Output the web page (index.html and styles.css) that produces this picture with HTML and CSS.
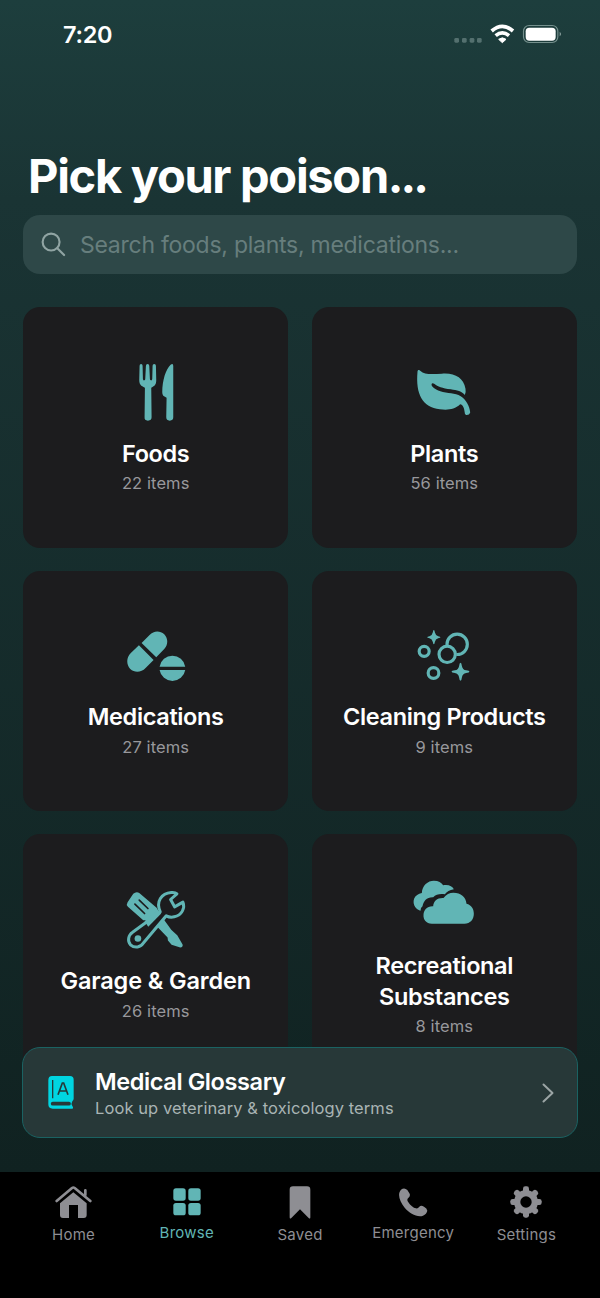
FILE: index.html
```html
<!DOCTYPE html>
<html lang="en">
<head>
<meta charset="utf-8">
<title>Pick your poison</title>
<link rel="stylesheet" href="styles.css">
</head>
<body>
<div class="app">
  <header class="status">
    <span class="time">7:20</span>
    <svg class="status-icons" viewBox="0 0 420 120">
      <g fill="#54706f"><rect x="43" y="69" width="14" height="14" rx="4"/><rect x="66" y="69" width="14" height="14" rx="4"/><rect x="89" y="69" width="14" height="14" rx="4"/><rect x="111" y="69" width="14" height="14" rx="4"/></g>
      <g fill="none" stroke="#fff" stroke-width="11"><path d="M155 48Q187 20 219 48"/><path d="M167 62Q187 45 207 62"/></g>
      <path d="M176 73Q187 64 198 73L187 83Z" fill="#fff" stroke="#fff" stroke-width="3" stroke-linejoin="round"/>
      <rect x="250.500" y="31.500" width="103" height="51" rx="17" fill="none" stroke="#75908d" stroke-width="3.500"/>
      <rect x="257" y="38" width="90" height="39" rx="11" fill="#fff"/>
      <path d="M359 50Q367 57 359 64Z" fill="#8ba19f"/>
    </svg>
  </header>
  <main class="content">
    <h1 class="title">Pick your poison<span class="dots">...</span></h1>
    <div class="search">
      <svg class="search-icon" viewBox="0 0 26 26"><circle cx="10.500" cy="10.500" r="8.800"/><path d="M17 17L24 24"/></svg>
      <span class="placeholder">Search foods, plants, medications...</span>
    </div>
    <section class="grid">
      <article class="card">
        <svg class="card-icon" viewBox="8.250 27 198 198">
          <path d="M58 47Q58 42 62.500 42T67 47L68 87Q69 92 72 91Q75 91 75 86L77 47Q77 42 82 42T87 47L89 86Q89 91 92 91Q95 92 96 87L97 47Q97 42 102 42T107 47L108 90C108 103 104 108 93 113L94 202Q94 212 83 212T73 202L74 113C62 108 57 103 57 90Z"/>
          <path d="M151 44Q159 38 159 48V202Q159 212 148.500 212T138 202L139 143L129 137Q126 135 126 127C126 90 137 57 151 44Z"/>
        </svg>
        <h2 class="name">Foods</h2><p class="count">22 items</p>
      </article>
      <article class="card">
        <svg class="card-icon" viewBox="34.500 27 198 198">
          <path d="M54 65C54 58 60 59 63 63C75 76 105 72 127 71C166 68 192 83 198 116Q200 128 196 135C188 124 172 121 154 118C128 114 115 110 104 101Q97 97 96 104C96 110 110 121 130 126C153 131 174 129 190 143C205 156 212 177 212 188Q209 196 200 195Q195 193 195 184C194 174 190 164 182 163C165 179 145 181 121 178C69 170 48 134 54 65Z"/>
        </svg>
        <h2 class="name">Plants</h2><p class="count">56 items</p>
      </article>
      <article class="card">
        <svg class="card-icon" viewBox="23.250 9 198 198">
          <path d="M79 69L103 45C115 32 134 31 147 43C159 56 159 74 147 87L123 112ZM71 76L115 120L91 144C78 158 58 159 45 147C33 134 33 113 46 100Z"/>
          <path d="M133 140A39 39 0 0 1 210 140ZM133 150H210A39 39 0 0 1 133 150Z"/>
        </svg>
        <h2 class="name">Medications</h2><p class="count">27 items</p>
      </article>
      <article class="card">
        <svg class="card-icon" viewBox="19.500 9 198 198">
          <g class="rings"><circle cx="158" cy="73" r="30.500"/><circle class="cutout" cx="128" cy="103" r="28"/><circle cx="128" cy="103" r="24.500"/><circle cx="59" cy="94" r="15"/><circle cx="87" cy="159" r="16"/></g>
          <path d="M88 30Q90 30 91 37Q93 47 101 49Q108 50 108 52Q108 54 101 55Q93 57 91 66Q90 73 88 73Q86 73 85 66Q83 57 75 55Q68 54 68 52Q68 50 75 49Q83 47 85 37Q86 30 88 30ZM168 128Q171 128 172 137Q174 149 185 151Q195 152 195 155Q195 158 185 159Q174 161 172 173Q171 182 168 182Q165 182 164 173Q162 161 151 159Q141 158 141 155Q141 152 151 151Q162 149 164 137Q165 128 168 128Z"/>
        </svg>
        <h2 class="name">Cleaning Products</h2><p class="count">9 items</p>
      </article>
      <article class="card">
        <svg class="card-icon" viewBox="23.250 19.500 198 198">
          <path d="M37 65L54 40Q63 32 73 38L124 82L142 112L168 148L176 155L186 164L202 192Q204 200 195 201L169 193L158 180L157 171L116 128L94 119L84 119L38 79Q32 72 37 65Z"/>
          <path class="slot" d="M72 59L98 84M59 71L88 99"/>
          <path class="wrench" d="M135 94C121 63 139 38 168 36Q180 35 185 40L166 57L178 79L203 65C210 83 200 104 177 109Q164 112 153 106L85 187C77 201 58 204 46 193C35 182 40 163 52 155L125 102Z"/>
          <path d="M88 122L126 90L138 99L99 139Z"/>
          <circle cx="68" cy="174" r="10"/>
        </svg>
        <h2 class="name garage">Garage &amp; Garden</h2><p class="count">26 items</p>
      </article>
      <article class="card">
        <svg class="card-icon" viewBox="19.500 3 198 198">
          <path d="M44 121C25 112 21 86 38 75Q44 70 52 69C53 46 70 32 88 32C102 32 111 38 116 46C130 42 144 48 148 58C135 61 127 65 121 73C107 71 94 73 86 82C67 81 57 93 54 109Q48 113 48 122Z"/>
          <path d="M82 161C65 161 56 148 57 135C58 119 68 108 86 109C87 93 98 83 117 84C125 73 135 68 147 68C169 68 184 80 186 101C201 105 208 116 208 131C208 148 197 161 180 161Z"/>
        </svg>
        <h2 class="name">Recreational<br>Substances</h2><p class="count">8 items</p>
      </article>
    </section>
    <aside class="glossary">
      <svg class="book" viewBox="145 136 81 105">
        <path d="M157 139H211Q222 139 222 150V207Q222 211 218 215Q213 223 218 229Q222 233 219 237H159Q146 237 146 224V152Q146 139 157 139Z" fill="#00d5e1"/>
        <g fill="none" stroke="#263939"><path d="M159 151V206" stroke-width="4"/><path d="M175 195L188 160H192L205 195M180 184H200" stroke-width="5"/><path d="M159 222H208" stroke-width="11" stroke-linecap="round"/></g>
      </svg>
      <div class="glossary-copy"><h2 class="glossary-title">Medical Glossary</h2><p class="glossary-sub">Look up veterinary &amp; toxicology terms</p></div>
      <svg class="chevron" viewBox="0 0 12 20"><path d="M1.500 1.500L10.500 10L1.500 18.500"/></svg>
    </aside>
  </main>
  <nav class="tabs">
    <a class="tab"><svg class="tab-icon" viewBox="166 77 111 96"><path d="M181 129L221 96L261 129V164Q261 173 252 173H235V134H208V173H190Q181 173 181 164Z"/><path d="M171 122L217 83Q221 80 225 83L272 122M257 90V104" fill="none" stroke="#8e8e93" stroke-width="8" stroke-linecap="round"/></svg><span class="label">Home</span></a>
    <a class="tab tab-browse"><svg class="tab-icon" viewBox="518 83 86 86"><rect x="519" y="84" width="38" height="38" rx="8"/><rect x="565" y="84" width="38" height="38" rx="8"/><rect x="519" y="129" width="38" height="38" rx="8"/><rect x="565" y="129" width="38" height="38" rx="8"/></svg><span class="label">Browse</span></a>
    <a class="tab tab-saved"><svg class="tab-icon" viewBox="0 0 66 99"><path d="M2 11Q2 1 12 1H54Q64 1 64 11V94Q64 100 59 96L33 70L7 96Q2 100 2 94Z"/></svg><span class="label">Saved</span></a>
    <a class="tab tab-emergency"><svg class="tab-icon" viewBox="296 83 86 87"><path d="M302 88Q312 80 321 89L328 100Q331 108 323 114Q319 119 323 124C331 136 339 142 347 144Q352 146 357 139Q362 134 371 139Q380 144 381 151Q379 161 368 166C351 172 327 159 313 142C298 124 290 101 302 88Z"/></svg><span class="label">Emergency</span></a>
    <a class="tab"><svg class="tab-icon" viewBox="631 77 96 96"><g><circle cx="679" cy="125" r="36"/><g id="teeth"><rect x="670" y="78" width="18" height="94" rx="7"/><rect x="632" y="116" width="94" height="18" rx="7"/></g><use href="#teeth" transform="rotate(45 679 125)"/></g><circle cx="679" cy="125" r="17" fill="#000"/></svg><span class="label">Settings</span></a>
  </nav>
</div>
</body>
</html>
```
FILE: styles.css
```css
* { box-sizing: border-box; margin: 0; padding: 0; }
body { background: #000; font-family: Inter, "Liberation Sans", sans-serif; color: #fff; }
svg { display: block; flex: none; }
.app { display: flex; flex-direction: column; width: 600px; height: 1298px; overflow: hidden; background: linear-gradient(#1d3e3d 0, #1a3434 200px, #102221 1172px); }
.status { display: flex; flex: none; justify-content: space-between; height: 146px; padding: 15px 20px 0 63px; }
.time { font-size: 23.500px; font-weight: 600; line-height: 40px; letter-spacing: -.3px; }
.status-icons { width: 140px; height: 40px; }
.content { position: relative; flex: none; height: 1026px; padding: 0 23px; overflow: hidden; }
.title { padding-left: 5px; font-size: 47px; line-height: 60px; font-weight: 700; letter-spacing: -1.300px; white-space: nowrap; }
.dots { letter-spacing: -3px; }
.search { display: flex; align-items: center; gap: 14px; height: 58.500px; margin-top: 9px; padding-left: 18px; border-radius: 17px; background: #2e4848; }
.search-icon { width: 25px; height: 25px; fill: none; stroke: #90a4a3; stroke-width: 2.200; stroke-linecap: round; }
.placeholder { padding-top: 2px; color: #677e7d; font-size: 23px; letter-spacing: -.26px; white-space: nowrap; }
.grid { display: grid; grid-template-columns: 1fr 1fr; grid-auto-rows: 240.500px; gap: 23.200px; margin-top: 33.500px; }
.card { display: flex; flex-direction: column; align-items: center; justify-content: center; border-radius: 17px; background: #1c1c1e; text-align: center; }
.card-icon { width: 66px; height: 66px; margin-top: -1px; fill: #61b5b5; }
.rings { fill: none; stroke: #61b5b5; stroke-width: 9.500; }
.rings .cutout { fill: #1c1c1e; stroke: none; }
.slot { fill: none; stroke: #1c1c1e; stroke-width: 5; stroke-linecap: round; }
.wrench { fill: #1c1c1e; stroke: #61b5b5; stroke-width: 9; stroke-linejoin: round; }
.name { margin-top: 12.500px; font-size: 23.500px; line-height: 31px; font-weight: 600; letter-spacing: -.36px; white-space: nowrap; }
.garage { letter-spacing: -.14px; }
.count { margin-top: 3.500px; font-size: 16.500px; line-height: 22px; color: #98989c; letter-spacing: .1px; }
.glossary { position: absolute; left: 22px; right: 22px; top: 901px; display: flex; align-items: center; height: 91px; padding: 0 23px 0 25px; border: 1.400px solid #1a6262; border-radius: 18px; background: #273838; }
.book { width: 27px; height: 35px; }
.glossary-copy { flex: 1; padding-left: 20px; }
.glossary-title { font-size: 23.500px; line-height: 30px; font-weight: 600; letter-spacing: -.4px; }
.glossary-sub { font-size: 16.500px; line-height: 22px; color: #a9b4b4; letter-spacing: .09px; }
.chevron { width: 12px; height: 20px; fill: none; stroke: #9ba5a5; stroke-width: 2; stroke-linecap: round; stroke-linejoin: round; }
.tabs { display: flex; flex: none; height: 126px; padding: 14px 17px 0; background: #000; }
.tab { display: flex; flex: 1 1 0; flex-direction: column; align-items: center; color: #8e8e93; }
.tab-icon { height: 32px; fill: currentColor; }
.label { margin-top: 7px; font-size: 15px; line-height: 20px; letter-spacing: .25px; }
.tab-browse { padding-top: 2px; color: #61b5b5; }
.tab-browse .tab-icon { height: 28px; }
.tab-saved .tab-icon { height: 33px; }
.tab-saved .label { margin-top: 6px; }
.tab-emergency { padding-top: 2px; }
.tab-emergency .tab-icon { height: 29px; }
.tab-emergency .label { margin-top: 6px; }
```
